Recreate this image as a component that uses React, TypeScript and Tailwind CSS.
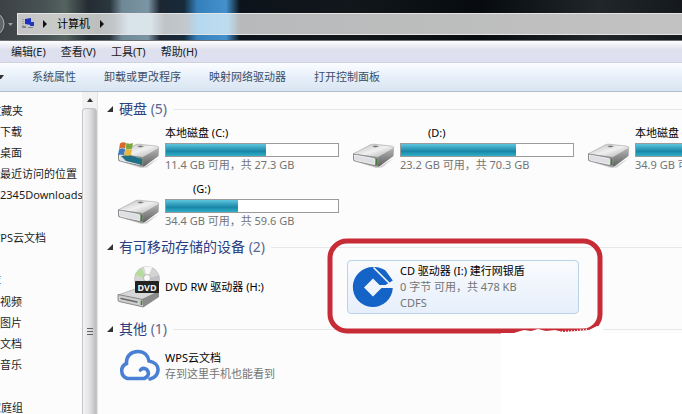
import React from 'react';

interface Drive {
  id: string;
  name: string;
  info?: string;
  extra?: string;
  used?: number;
  icon: React.ReactNode;
  indent?: boolean;
  selected?: boolean;
}

interface SectionProps {
  title: string;
  count: number;
  drives: Drive[];
}

const HardDriveIcon: React.FC<{ system?: boolean }> = ({ system }) => (
  <svg viewBox="0 0 43 42" className="w-[43px] h-[42px] shrink-0" aria-hidden="true">
    <defs>
      <linearGradient id="driveTop" x1="0" y1="0" x2="1" y2="1">
        <stop offset="0" stopColor="#b9b9b9" />
        <stop offset="0.5" stopColor="#f0f0f0" />
        <stop offset="1" stopColor="#a4a4a4" />
      </linearGradient>
      <linearGradient id="driveSide" x1="0" y1="0" x2="0" y2="1">
        <stop offset="0" stopColor="#b5b5b5" />
        <stop offset="1" stopColor="#5f5f5f" />
      </linearGradient>
    </defs>
    <path d="M2 33 L27 39 L42 30 L30 39.500 L24 40 Z" fill="#cfcfcf" />
    <path d="M1 26 L18 17 Q20 16 22 16.200 L39 18 Q42 18.500 42 20 L26 30 Z" fill="url(#driveTop)" stroke="#a2a2a2" strokeWidth="0.6" />
    <path d="M26 29 L42 20 L41.500 28 L28 38 Q26.500 39 25 38.500 Z" fill="url(#driveSide)" />
    <path d="M1 25.500 L25 29 Q27 29.500 26.500 32 L26 38 Q25 39 23 38.500 L3 33.500 Q1 33 1 31 Z" fill="#8c8c8c" />
    <path d="M2.500 27 L22 30.500 Q23 31 23 32 L22.500 36.500 L4 32.500 Q2.500 32 2.500 31 Z" fill="#dedfe2" stroke="#f7f7f7" strokeWidth="0.8" />
    <path d="M24.500 31 v6" stroke="#3f7d33" strokeWidth="1.600" />
    <path d="M20 18 l4 -0.500 l3 1 l-4 1 Z" fill="#777" />
    {system && (
      <g>
        <path d="M4 28 L12 27 L25 31 L25 37 L9 33 Z" fill="#1f6f86" />
        <path d="M3 15.500 Q6 13.500 9 15 L8 20.500 Q5 19 2 21 Z" fill="#d9682c" />
        <path d="M9.500 15 Q12.500 16.500 16 15 L15 20.500 Q12 22 8.500 20.500 Z" fill="#78a83b" />
        <path d="M2 21.500 Q5 19.500 8 21 L7 27 Q4 25.500 1 27.500 Z" fill="#3c78bd" />
        <path d="M8.500 21 Q12 22.500 15 21 L14 27 Q11 28.500 7.500 27 Z" fill="#e7b73a" />
      </g>
    )}
  </svg>
);

const DvdIcon = () => (
  <svg viewBox="0 0 43 42" className="w-[43px] h-[42px] shrink-0" aria-hidden="true">
    <circle cx="30" cy="13" r="12.500" fill="#d4d4d4" stroke="#b9b9b9" strokeWidth="0.6" />
    <path d="M30 13 L18 9 A12.500 12.500 0 0 1 24 2 Z" fill="#b5dc9d" />
    <path d="M30 13 L27 1 A12.500 12.500 0 0 1 35 1.500 Z" fill="#f8f8f8" />
    <path d="M30 13 L42 9 A12.500 12.500 0 0 1 42 17 Z" fill="#bfc1c4" />
    <circle cx="30" cy="12" r="3.500" fill="#fafafa" stroke="#aaa" strokeWidth="0.8" />
    <path d="M1 29 L18 23 L42 25 L26 34 Z" fill="#d7d7d7" stroke="#999" strokeWidth="0.6" />
    <path d="M25 33 L42 25 L42 31 L27 41 Z" fill="#8b8b8b" />
    <path d="M1 28.500 L26 33.500 L26.500 41 L2 35.500 Q1 35 1 34 Z" fill="#c9c9c9" stroke="#777" strokeWidth="0.8" />
    <path d="M3 31 L21 35 V37.500 L3 33.500 Z" fill="#6a6a6a" stroke="#f1f1f1" strokeWidth="0.6" />
    <path d="M24.500 34.500 v4.500" stroke="#3f7d33" strokeWidth="1.500" />
    <rect x="18" y="15" width="24" height="12" rx="1" fill="#222" />
    <text x="30" y="24.500" textAnchor="middle" fontSize="9" fontWeight="700" fill="#f2f2f2" fontFamily="Noto Sans, sans-serif">DVD</text>
  </svg>
);

const BankIcon = () => (
  <svg viewBox="0 0 43 42" className="w-[43px] h-[42px] shrink-0" aria-hidden="true">
    <path
      d="M21 12.500 L12 21.500 L21 30.500 L29.500 22 H40.800 A20 20 0 1 1 21 1 Q28 0.500 33.500 4.500 L40.800 14.500 L33.500 19 H27.500 Z"
      fill="#1463c6"
    />
    <path d="M21.500 1.500 L37 17" stroke="#f4f8fd" strokeWidth="1.600" />
  </svg>
);

const CloudIcon = () => (
  <svg viewBox="0 0 43 42" className="w-[43px] h-[42px] shrink-0" aria-hidden="true">
    <path
      d="M27 33.500 H10.500 A8 8 0 0 1 9.500 18.500 C9 11 14 6.500 21 6.500 C27 6.500 31 10.500 32 16 C37.500 17 41.500 20.500 41 25.500 C40.500 30 37 33 33 34 M27 33.500 C31 32 32 29 31 26.500 C29.500 23 25.500 22.500 23.500 25"
      fill="none"
      stroke="#4a80d4"
      strokeWidth="3.600"
      strokeLinecap="round"
    />
  </svg>
);

const sections: SectionProps[] = [
  {
    title: '硬盘',
    count: 5,
    drives: [
      { id: 'c', name: '本地磁盘 (C:)', info: '11.4 GB 可用，共 27.3 GB', used: 58, icon: <HardDriveIcon system /> },
      { id: 'd', name: '(D:)', info: '23.2 GB 可用，共 70.3 GB', used: 67, icon: <HardDriveIcon />, indent: true },
      { id: 'e', name: '本地磁盘 (E:)', info: '34.9 GB 可用，共 70.3 GB', used: 50, icon: <HardDriveIcon /> },
      { id: 'g', name: '(G:)', info: '34.4 GB 可用，共 59.6 GB', used: 42, icon: <HardDriveIcon />, indent: true },
    ],
  },
  {
    title: '有可移动存储的设备',
    count: 2,
    drives: [
      { id: 'h', name: 'DVD RW 驱动器 (H:)', icon: <DvdIcon /> },
      { id: 'i', name: 'CD 驱动器 (I:) 建行网银盾', info: '0 字节 可用，共 478 KB', extra: 'CDFS', icon: <BankIcon />, selected: true },
    ],
  },
  {
    title: '其他',
    count: 1,
    drives: [{ id: 'wps', name: 'WPS云文档', info: '存到这里手机也能看到', icon: <CloudIcon /> }],
  },
];

const menus = ['编辑(E)', '查看(V)', '工具(T)', '帮助(H)'];
const commands = ['系统属性', '卸载或更改程序', '映射网络驱动器', '打开控制面板'];

const favorites = [
  { title: '收藏夹', items: ['下载', '桌面', '最近访问的位置', '2345Downloads'] },
  { title: 'WPS云文档', items: [] },
  { title: '库', items: ['视频', '图片', '文档', '音乐'] },
  { title: '家庭组', items: [] },
];

// Hand-drawn red frame round the selected drive, rubbed out at its lower right
const Highlight = () => (
  <svg viewBox="0 0 276 96" className="absolute -left-[21px] -top-[23px] w-[276px] h-[96px] max-w-none pointer-events-none" aria-hidden="true">
    <rect x="3" y="3" width="270" height="90" rx="17" fill="none" stroke="#c62b36" strokeWidth="5" />
    <path d="M184 96 L190 94 L197 92 L204 93 L211 91 L219 93 L228 92 L236 94 L250 93 L262 92 L270 88 L276 90 V96 Z" fill="#fff" />
    <path d="M226 94 L246 93 L262 91" fill="none" stroke="#fff" strokeWidth="1.500" strokeDasharray="1 2" />
  </svg>
);

const Tile: React.FC<Drive> = ({ name, info, extra, used, icon, indent, selected }) => (
  <button
    className={
      selected
        ? 'relative flex items-center gap-[5px] px-1 py-0.5 text-left border border-[#b9d3e8] rounded-sm bg-linear-to-b from-[#fafbfd] to-[#e6effb]'
        : 'flex items-center gap-[5px] px-1 py-0.5 text-left border border-transparent'
    }
  >
    {icon}
    <span className="flex flex-col flex-1 leading-4 whitespace-nowrap">
      <span className={indent ? 'pl-7 text-black' : 'text-black'}>{name}</span>
      {used !== undefined && (
        <span className="block w-[174px] h-3.5 mt-0.5 border border-[#9b9b9b] bg-white">
          <span
            className="block h-full bg-linear-to-b from-[#5cc6de] via-[#1886a8] via-60% to-[#2fb0c6]"
            style={{ width: `${used}%` }}
          />
        </span>
      )}
      {info && <span className="text-[#747474]">{info}</span>}
      {extra && <span className="text-[#747474]">{extra}</span>}
    </span>
    {selected && <Highlight />}
  </button>
);

const Section: React.FC<SectionProps> = ({ title, count, drives }) => (
  <section className="mb-0.5">
    <div className="flex items-center h-[26px] pl-2">
      <svg viewBox="0 0 6 6" className="w-1.5 h-1.5 mr-1.5" aria-hidden="true">
        <path d="M6 0 V6 H0 Z" fill="#333" />
      </svg>
      <h2 className="text-sm text-[#2b3f80] whitespace-nowrap">
        {title} <span className="text-[#5a678f]">({count})</span>
      </h2>
      <div className="flex-1 h-px ml-1.5 bg-[#e8e8ea]" />
    </div>
    <div className="grid grid-cols-[repeat(3,232px)] gap-x-[3px] gap-y-0.5 pl-[13px]">
      {drives.map((drive) => (
        <Tile key={drive.id} {...drive} />
      ))}
    </div>
  </section>
);

const AddressBar = () => (
  <header className="flex h-[41px] shrink-0 pt-[13px] border-b border-[#6b7075] bg-[linear-gradient(90deg,#3c4246_0,#485254_45px,#55635f_65px,#252c33_88px,#2b363d_110px,#6f8896_122px,#7c95a4_148px,#1c2731_160px,#17293a_184px,#3580bb_197px,#4391cd_226px,#0c131a_240px,#12171c_350px,#070b10_480px,#20262a_600px,#15191d_100%)]">
    <div className="flex items-center w-[17px] h-[22px] shrink-0">
      <svg viewBox="0 0 17 22" className="w-[17px] h-[22px]" aria-hidden="true">
        <circle cx="-8" cy="11" r="12" fill="#5f666a" stroke="#a9afb2" strokeWidth="1" />
        <path d="M8 10 h5 l-2.500 3 Z" fill="#9aa0a3" />
      </svg>
    </div>
    <div className="flex flex-1 items-center h-[22px] pl-[3px] border border-r-0 border-[#e4e4e4] bg-[linear-gradient(90deg,#c4c4c4_0,#c9cbc8_40px,#bcbfbd_80px,#c1c6ca_96px,#d9e3ea_110px,#d9e3ea_133px,#bfc3c6_147px,#c2c8cd_168px,#b5d8ee_180px,#bedcf0_210px,#b8b9ba_222px,#c2c2c2_100%)]">
      <svg viewBox="0 0 14 14" className="w-3.5 h-3.5" aria-hidden="true">
        <path d="M4 2 L10 1 V8 L4 7 Z" fill="#1c2fc4" />
        <path d="M9 5 H13 V9 H9 Z" fill="#2238b5" />
        <path d="M7 10 h5 v1 h-5 Z M1 9 h4 v2 h-4 Z" fill="#7e8795" />
        <path d="M2 2 v7" stroke="#7a8a7c" strokeWidth="1" strokeDasharray="1 1" />
      </svg>
      <svg viewBox="0 0 4 8" className="w-1 h-2 ml-2" aria-hidden="true">
        <path d="M0 0 L4 4 L0 8 Z" fill="#111" />
      </svg>
      <a href="#computer" className="mx-2.5 text-black">计算机</a>
      <svg viewBox="0 0 4 8" className="w-1 h-2" aria-hidden="true">
        <path d="M0 0 L4 4 L0 8 Z" fill="#111" />
      </svg>
    </div>
  </header>
);

const Sidebar = () => (
  <aside className="flex w-[98px] shrink-0 border-r border-[#e3e3f0]">
    <nav className="flex-1 overflow-hidden pt-2 whitespace-nowrap text-[#1c1c1c]">
      {favorites.map((group) => (
        <div key={group.title} className="mb-[22px]">
          <a href="#group" className="block -ml-2.5 leading-[21px]">{group.title}</a>
          {group.items.map((item) => (
            <a key={item} href="#item" className="block leading-[21px]">{item}</a>
          ))}
        </div>
      ))}
    </nav>
    <div className="flex flex-col w-[15px] bg-[#f2f2f3]">
      <div className="flex items-center justify-center h-4 shrink-0">
        <svg viewBox="0 0 6 4" className="w-1.5 h-1" aria-hidden="true">
          <path d="M3 0 L6 4 H0 Z" fill="#333" />
        </svg>
      </div>
      <div className="flex flex-col flex-1 items-center gap-px pt-[219px] border border-b-0 border-[#c4c4c8] rounded-t-sm bg-linear-to-r from-[#f3f3f3] via-[#e2e2e4] to-[#bcbcc1]">
        <span className="w-1.5 h-px bg-[#666]" />
        <span className="w-1.5 h-px mt-px bg-[#666]" />
        <span className="w-1.5 h-px mt-px bg-[#666]" />
      </div>
    </div>
  </aside>
);

export default function App() {
  return (
    <div className="flex flex-col h-screen overflow-hidden bg-[#fcfcfc] text-[11px] leading-4 font-['Noto_Sans','Noto_Sans_CJK_SC',sans-serif]">
      <AddressBar />
      <div className="flex items-center gap-[15px] h-[22px] shrink-0 pl-[11px] border-b border-[#cfd2dc] text-[#1a1a1a] bg-linear-to-b from-white via-[#dfe1ee] via-40% to-[#dedff1]">
        {menus.map((menu) => (
          <button key={menu}>{menu}</button>
        ))}
      </div>
      <div className="flex items-center h-[29px] shrink-0 border-b border-[#b3bfcd] text-[#3a4f6b] bg-linear-to-b from-[#fbfdff] via-[#e9f1fa] via-45% to-[#d8e5f2]">
        <svg viewBox="0 0 4 4" className="w-1 h-1" aria-hidden="true">
          <path d="M0 0 H4 L1 4 H0 Z" fill="#333" />
        </svg>
        <div className="flex gap-7 pl-7">
          {commands.map((command) => (
            <button key={command}>{command}</button>
          ))}
        </div>
      </div>
      <div className="flex flex-1 min-h-0">
        <Sidebar />
        <main className="relative flex-1 min-w-0 overflow-hidden pt-1 pl-px">
          {sections.map((section) => (
            <Section key={section.title} {...section} />
          ))}
          <div className="absolute right-0 bottom-0 w-[181px] h-[81px] bg-white" />
        </main>
      </div>
    </div>
  );
}
